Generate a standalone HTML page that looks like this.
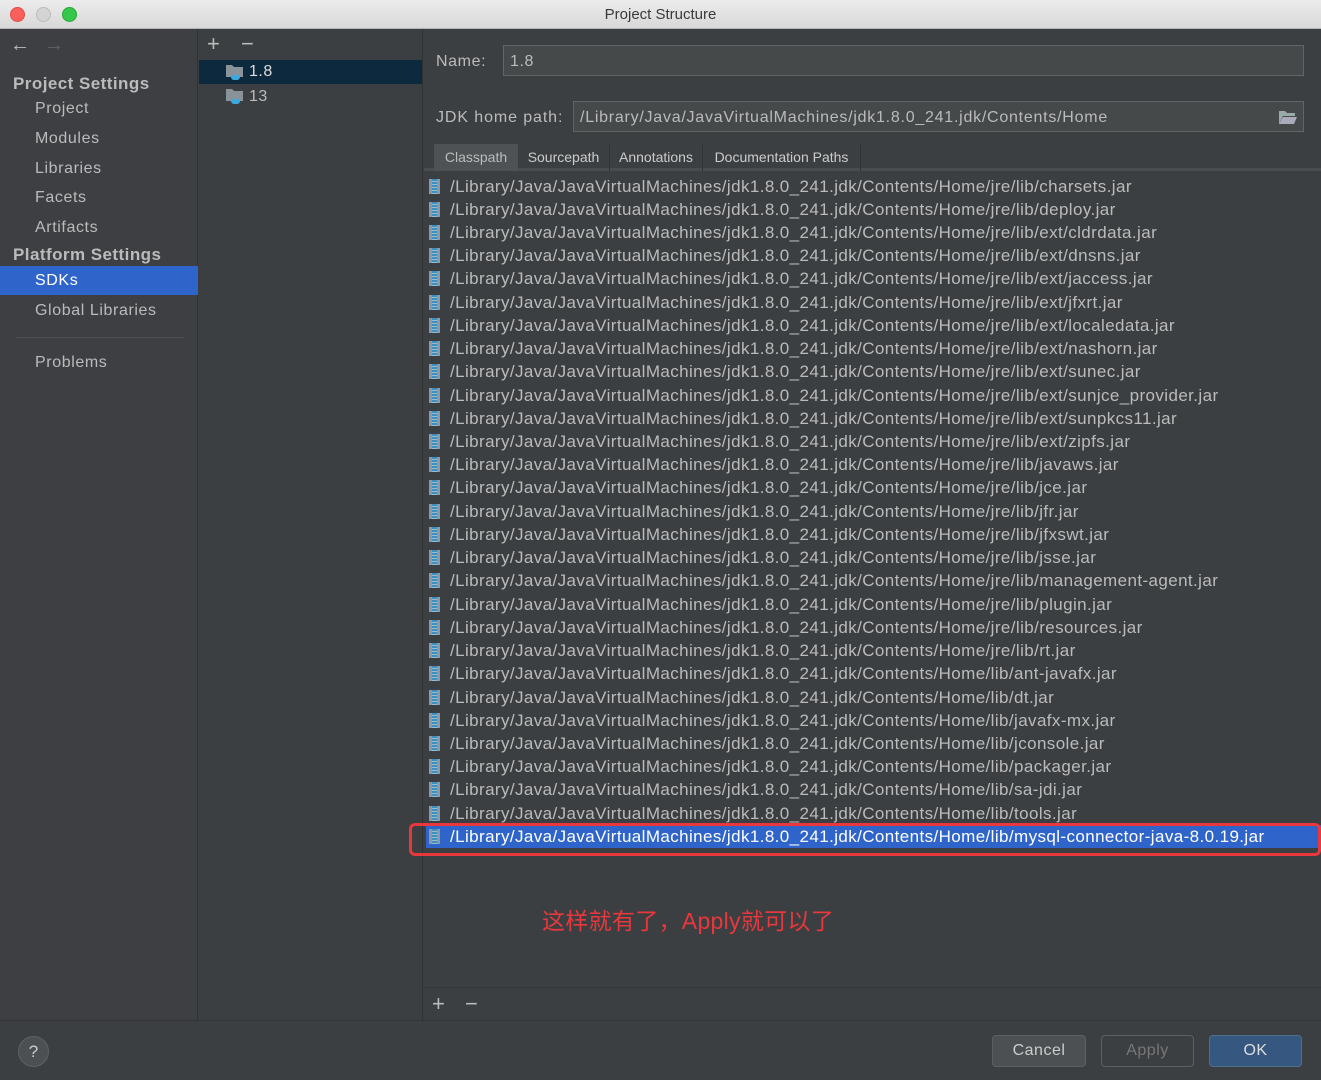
<!DOCTYPE html>
<html><head><meta charset="utf-8"><style>
*{margin:0;padding:0;box-sizing:border-box}
body{width:1321px;height:1080px;background:#3c3f41;font-family:"Liberation Sans","Noto Sans CJK SC",sans-serif;color:#bbbbbb;position:relative;overflow:hidden}
.abs{position:absolute}
.title{left:0;top:0;width:1321px;height:29px;background:linear-gradient(#ececec,#d8d8d8);border-bottom:1px solid #b5b5b5;text-align:center;font-size:15px;line-height:29px;color:#3a3a3a}
.dot{top:7px;width:15px;height:15px;border-radius:50%}
.side{left:0;top:29px;width:198px;height:991px;background:#3d3f43;border-right:1px solid #2f3133}
.mid{left:199px;top:29px;width:224px;height:991px;background:#3c3f41;border-right:1px solid #2f3133}
.si{position:absolute;left:35px;font-size:16px;color:#bbbbbb;letter-spacing:0.6px}
.sh{position:absolute;left:13px;font-size:17px;font-weight:bold;color:#bbbbbb;letter-spacing:0.45px}
.row{position:absolute;left:426px;height:23px;width:895px;font-size:17px;line-height:23px;color:#bbbbbb;white-space:nowrap;letter-spacing:0.4px}
.row span{position:absolute;left:24px}
.jar{position:absolute;left:3px;top:4px;width:11px;height:15px;background:repeating-linear-gradient(#3e8fc0 0 2px,#9bc 2px 3px);border-left:3px solid #8a9aa8;border-right:3px solid #8a9aa8}
.btn{top:1035px;height:32px;border-radius:4px;font-size:16px;line-height:30px;text-align:center;letter-spacing:0.5px}
</style></head><body>
<div class="abs title">Project Structure</div>
<div class="abs dot" style="left:10px;background:#fc605c;border:1px solid #de4a44"></div>
<div class="abs dot" style="left:36px;background:#d4d4d4;border:1px solid #bcbcbc"></div>
<div class="abs dot" style="left:62px;background:#34c84a;border:1px solid #2aa53a"></div>

<div class="abs side">
 <div class="abs" style="left:10px;top:5px;font-size:20px;color:#bbb">&#8592;</div>
 <div class="abs" style="left:44px;top:5px;font-size:20px;color:#5e6163">&#8594;</div>
 <div class="sh" style="top:45px">Project Settings</div>
 <div class="si" style="top:71px">Project</div>
 <div class="si" style="top:101px">Modules</div>
 <div class="si" style="top:131px">Libraries</div>
 <div class="si" style="top:160px">Facets</div>
 <div class="si" style="top:190px">Artifacts</div>
 <div class="sh" style="top:216px">Platform Settings</div>
 <div class="abs" style="left:0;top:237px;width:198px;height:29px;background:#2f65ca"></div>
 <div class="si" style="top:243px;color:#fff">SDKs</div>
 <div class="si" style="top:273px">Global Libraries</div>
 <div class="abs" style="left:16px;top:308px;width:168px;height:1px;background:#4b4e51"></div>
 <div class="si" style="top:325px">Problems</div>
</div>

<div class="abs mid">
 <div class="abs" style="left:8px;top:2px;font-size:22px;color:#bbb">+</div>
 <div class="abs" style="left:42px;top:2px;font-size:22px;color:#bbb">&#8722;</div>
 <div class="abs" style="left:0;top:31px;width:223px;height:24px;background:#0d293e"></div>
 <svg class="abs" style="left:26px;top:34px" width="20" height="18"><path d="M1 2h6l2 2h9v10H1z" fill="#8a9399"/><path d="M6 12h9v2a3 3 0 0 1-3 3H9a3 3 0 0 1-3-3z" fill="#3ea8de"/></svg>
 <div class="abs" style="left:50px;top:34px;font-size:16px;color:#ddd;letter-spacing:0.5px">1.8</div>
 <svg class="abs" style="left:26px;top:58px" width="20" height="18"><path d="M1 2h6l2 2h9v10H1z" fill="#8a9399"/><path d="M6 12h9v2a3 3 0 0 1-3 3H9a3 3 0 0 1-3-3z" fill="#3ea8de"/></svg>
 <div class="abs" style="left:50px;top:59px;font-size:16px;color:#bbb;letter-spacing:0.5px">13</div>
</div>

<div class="abs" style="left:436px;top:53px;font-size:16px;letter-spacing:0.6px">Name:</div>
<div class="abs" style="left:503px;top:45px;width:801px;height:31px;background:#45494a;border:1px solid #646464;font-size:16px;line-height:31px;padding-left:6px;letter-spacing:0.6px">1.8</div>
<div class="abs" style="left:436px;top:109px;font-size:16px;letter-spacing:0.9px">JDK home path:</div>
<div class="abs" style="left:573px;top:101px;width:731px;height:31px;background:#45494a;border:1px solid #646464;font-size:16px;line-height:31px;padding-left:6px;letter-spacing:0.75px">/Library/Java/JavaVirtualMachines/jdk1.8.0_241.jdk/Contents/Home</div>
<svg class="abs" style="left:1278px;top:109px" width="20" height="16"><path d="M1 2h6l2 2h8v3H5l-4 8z" fill="#9aa"/><path d="M5 8h14l-3 7H1z" fill="#aab"/></svg>

<div class="abs" style="left:424px;top:143px;width:897px;height:28px;background:#3c3f41;border-bottom:3px solid #4a4d50"></div>
<div class="abs" style="left:434px;top:144px;width:84px;height:27px;background:#4e5254;font-size:14px;line-height:26px;text-align:center">Classpath</div>
<div class="abs" style="left:518px;top:144px;width:92px;height:27px;border-right:1px solid #333;font-size:14px;line-height:26px;text-align:center;color:#ccc">Sourcepath</div>
<div class="abs" style="left:610px;top:144px;width:93px;height:27px;border-right:1px solid #333;font-size:14px;line-height:26px;text-align:center;color:#ccc">Annotations</div>
<div class="abs" style="left:703px;top:144px;width:158px;height:27px;border-right:1px solid #333;font-size:14px;line-height:26px;text-align:center;color:#ccc">Documentation Paths</div>

<div id="list"></div>
<script>
var p="/Library/Java/JavaVirtualMachines/jdk1.8.0_241.jdk/Contents/Home/";
var f=["jre/lib/charsets.jar","jre/lib/deploy.jar","jre/lib/ext/cldrdata.jar","jre/lib/ext/dnsns.jar","jre/lib/ext/jaccess.jar","jre/lib/ext/jfxrt.jar","jre/lib/ext/localedata.jar","jre/lib/ext/nashorn.jar","jre/lib/ext/sunec.jar","jre/lib/ext/sunjce_provider.jar","jre/lib/ext/sunpkcs11.jar","jre/lib/ext/zipfs.jar","jre/lib/javaws.jar","jre/lib/jce.jar","jre/lib/jfr.jar","jre/lib/jfxswt.jar","jre/lib/jsse.jar","jre/lib/management-agent.jar","jre/lib/plugin.jar","jre/lib/resources.jar","jre/lib/rt.jar","lib/ant-javafx.jar","lib/dt.jar","lib/javafx-mx.jar","lib/jconsole.jar","lib/packager.jar","lib/sa-jdi.jar","lib/tools.jar","lib/mysql-connector-java-8.0.19.jar"];
var h="";
for(var i=0;i<f.length;i++){var t=174.5+i*23.23;var sel=i==28;
h+='<div class="row" style="top:'+t+'px;'+(sel?'background:#2f65ca;color:#fff;':'')+'"><div class="jar"></div><span>'+p+f[i]+'</span></div>';}
document.getElementById('list').innerHTML=h;
</script>
<div class="abs" style="left:409px;top:823px;width:912px;height:33px;border:3px solid #e8383d;border-radius:6px"></div>
<div class="abs" style="left:542px;top:902px;font-size:23px;color:#e8383d;letter-spacing:0.3px">这样就有了，Apply就可以了</div>

<div class="abs" style="left:424px;top:987px;width:897px;height:1px;background:#323436"></div>
<div class="abs" style="left:432px;top:991px;font-size:22px">+</div>
<div class="abs" style="left:465px;top:991px;font-size:22px">&#8722;</div>
<div class="abs" style="left:0;top:1020px;width:1321px;height:1px;background:#323436"></div>
<div class="abs" style="left:18px;top:1036px;width:31px;height:31px;border-radius:50%;background:#4c5052;border:1px solid #5e6163;text-align:center;line-height:29px;font-size:17px;color:#ccc">?</div>
<div class="abs btn" style="left:992px;width:94px;background:#4c5052;border:1px solid #5e6060;color:#ccc">Cancel</div>
<div class="abs btn" style="left:1101px;width:93px;background:#3c3f41;border:1px solid #5e6060;color:#777">Apply</div>
<div class="abs btn" style="left:1209px;width:93px;background:#365880;border:1px solid #4c708c;color:#ddd">OK</div>
</body></html>
